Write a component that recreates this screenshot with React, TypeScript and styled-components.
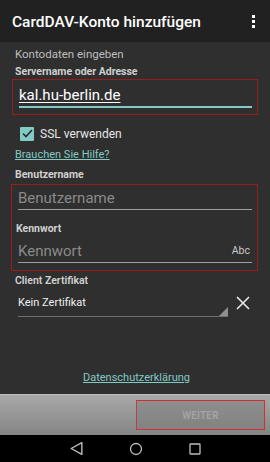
import React from "react";
import styled, { createGlobalStyle } from "styled-components";

const Global = createGlobalStyle`
  html, body { margin: 0; padding: 0; background: #2f2f2f; }
  body { font-family: Roboto, "Noto Sans", Arial, sans-serif; }
  * { box-sizing: border-box; }
`;

const Screen = styled.div`
  width: 270px;
  height: 462px;
  display: flex;
  flex-direction: column;
  background: #2f2f2f;
  overflow: hidden;
`;

const AppBar = styled.div`
  height: 42px;
  flex: none;
  display: flex;
  align-items: center;
  justify-content: space-between;
  padding: 0 12px 0 12px;
  background: #212121;
`;

const Title = styled.div`
  color: #fff;
  font-size: 15.5px;
  font-weight: 500;
  margin-top: 1px;
`;

const Dots = styled.div`
  display: flex;
  flex-direction: column;
  gap: 2px;
  margin-right: 3px;
  span { width: 3px; height: 3px; background: #fff; display: block; }
`;

const Content = styled.div`
  flex: 1;
  display: flex;
  flex-direction: column;
  padding: 5px 12px 0 15px;
`;

const Hint = styled.div`
  color: #bdbdbd;
  font-size: 11.5px;
  margin-bottom: 5px;
`;

const Label = styled.div<{ $mt?: number }>`
  color: #d0d0d0;
  font-size: 10.5px;
  font-weight: 700;
  line-height: 12px;
  margin-top: ${(p) => p.$mt ?? 0}px;
`;

const RedBox = styled.div<{ $ml?: number; $mt?: number }>`
  border: 1px solid #9a1d1d;
  margin-left: ${(p) => p.$ml ?? -3}px;
  margin-top: ${(p) => p.$mt ?? 0}px;
  padding: 0 5px 0 6px;
  display: flex;
  flex-direction: column;
`;

const Field = styled.div<{ $accent?: boolean; $h: number }>`
  height: ${(p) => p.$h}px;
  display: flex;
  align-items: flex-end;
  justify-content: space-between;
  padding-bottom: 2px;
  border-bottom: ${(p) => (p.$accent ? "2px solid #80cbc4" : "1px solid #9e9e9e")};
`;

const Value = styled.span`
  color: #fff;
  font-size: 15px;
  text-decoration: underline;
  text-underline-offset: 2px;
`;

const Placeholder = styled.span`
  color: #8a8a8a;
  font-size: 15px;
`;

const Abc = styled.span`
  color: #c8c8c8;
  font-size: 10.5px;
  margin: 0 2px 3px 0;
`;

const CheckRow = styled.div`
  display: flex;
  align-items: center;
  gap: 6px;
  margin: 10px 0 0 5px;
  height: 17px;
`;

const Box = styled.div`
  width: 14px;
  height: 14px;
  background: #80cbc4;
  border-radius: 1px;
  display: flex;
  align-items: center;
  justify-content: center;
`;

const CheckText = styled.span`
  color: #e6e6e6;
  font-size: 12px;
`;

const Link = styled.a<{ $center?: boolean }>`
  color: #80cbc4;
  font-size: 11px;
  text-decoration: underline;
  align-self: ${(p) => (p.$center ? "center" : "flex-start")};
`;

const SelectRow = styled.div`
  display: flex;
  align-items: center;
  margin: 1px 0 0 3px;
  gap: 8px;
`;

const Select = styled.div`
  width: 210px;
  height: 29px;
  border-bottom: 1px solid #707070;
  position: relative;
  display: flex;
  align-items: center;
  color: #f0f0f0;
  font-size: 11px;
`;

const Corner = styled.div`
  position: absolute;
  right: 0;
  bottom: 0;
  width: 0;
  height: 0;
  border-left: 9px solid transparent;
  border-bottom: 9px solid #8f8f8f;
`;

const BottomBar = styled.div`
  height: 41px;
  flex: none;
  background: linear-gradient(#a8a8a8, #858585);
  border-top: 1px solid #bdbdbd;
  display: flex;
  justify-content: flex-end;
  align-items: center;
  padding-right: 5px;
`;

const NextBtn = styled.div`
  width: 129px;
  height: 30px;
  border: 1px solid #d32f2f;
  border-left-color: #b24444;
  background: linear-gradient(#8e8e8e, #828282);
  display: flex;
  align-items: center;
  justify-content: center;
  color: #a3a3a3;
  font-size: 10px;
  font-weight: 700;
  letter-spacing: 0.2px;
`;

const NavBar = styled.div`
  height: 27px;
  flex: none;
  background: #000;
  display: flex;
  align-items: center;
  justify-content: center;
  gap: 45px;
`;

const Spacer = styled.div<{ $h?: number }>`
  height: ${(p) => (p.$h ? `${p.$h}px` : "auto")};
  flex: ${(p) => (p.$h ? "none" : "1")};
`;

export default function App() {
  return (
    <>
      <Global />
      <Screen>
        <AppBar>
          <Title>CardDAV-Konto hinzufügen</Title>
          <Dots>
            <span />
            <span />
            <span />
          </Dots>
        </AppBar>
        <Content>
          <Hint>Kontodaten eingeben</Hint>
          <Label>Servername oder Adresse</Label>
          <RedBox $mt={1}>
            <Field $accent $h={28}>
              <Value>kal.hu-berlin.de</Value>
            </Field>
            <Spacer $h={6} />
          </RedBox>
          <CheckRow>
            <Box>
              <svg width="11" height="9" viewBox="0 0 11 9">
                <path d="M1 4.5 L4 7.5 L10 1" stroke="#2a2a2a" strokeWidth="1.6" fill="none" />
              </svg>
            </Box>
            <CheckText>SSL verwenden</CheckText>
          </CheckRow>
          <Link style={{ marginTop: 6 }}>Brauchen Sie Hilfe?</Link>
          <Label $mt={8}>Benutzername</Label>
          <RedBox $ml={-4} $mt={3}>
            <Field $h={25}>
              <Placeholder>Benutzername</Placeholder>
            </Field>
            <Label $mt={13} style={{ marginLeft: -2 }}>Kennwort</Label>
            <Field $h={28}>
              <Placeholder>Kennwort</Placeholder>
              <Abc>Abc</Abc>
            </Field>
            <Spacer $h={7} />
          </RedBox>
          <Label $mt={4} style={{ fontWeight: 600 }}>Client Zertifikat</Label>
          <SelectRow>
            <Select>
              Kein Zertifikat
              <Corner />
            </Select>
            <svg width="14" height="14" viewBox="0 0 14 14">
              <path d="M1 1 L13 13 M13 1 L1 13" stroke="#eeeeee" strokeWidth="1.5" />
            </svg>
          </SelectRow>
          <Spacer />
          <Link $center style={{ marginBottom: 10 }}>Datenschutzerklärung</Link>
        </Content>
        <BottomBar>
          <NextBtn>WEITER</NextBtn>
        </BottomBar>
        <NavBar>
          <svg width="15" height="15" viewBox="0 0 14 14">
            <path d="M12 1.5 L12 12.5 L2 7 Z" stroke="#bdbdbd" strokeWidth="1.3" fill="none" strokeLinejoin="round" />
          </svg>
          <svg width="14" height="14" viewBox="0 0 14 14">
            <circle cx="7" cy="7" r="5.5" stroke="#bdbdbd" strokeWidth="1.3" fill="none" />
          </svg>
          <svg width="14" height="14" viewBox="0 0 14 14">
            <rect x="2" y="2" width="10" height="10" rx="0.5" stroke="#bdbdbd" strokeWidth="1.3" fill="none" />
          </svg>
        </NavBar>
      </Screen>
    </>
  );
}
